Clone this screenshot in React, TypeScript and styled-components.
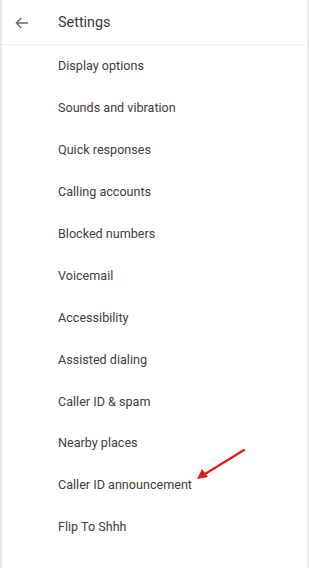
import React from 'react';
import styled, {createGlobalStyle} from 'styled-components';

const GlobalStyle = createGlobalStyle`
    html, body {
        margin: 0;
        padding: 0;
        background: #fff;
    }
    body {
        font-family: Roboto, 'Liberation Sans', Arial, sans-serif;
    }
`;

const Frame = styled.div`
    position: relative;
    width: 309px;
    height: 568px;
    box-sizing: border-box;
    border-left: 2px solid #e8e8e8;
    border-right: 2px solid #ececec;
    background: #fff;
    overflow: hidden;
`;

const Header = styled.header`
    display: flex;
    align-items: center;
    height: 45px;
    padding-top: 1px;
    box-sizing: border-box;
    border-bottom: 1px solid #efefef;
`;

const BackButton = styled.span`
    display: inline-flex;
    align-items: center;
    justify-content: center;
    width: 44px;
    height: 44px;
    margin-left: -2px;
    color: #6a6a6a;
`;

const Title = styled.h1`
    margin: 0 0 0 14px;
    font-size: 14.4px;
    font-weight: 400;
    color: #3a3a3a;
`;

const List = styled.ul`
    list-style: none;
    margin: 0;
    padding: 0;
`;

const Item = styled.li`
    display: flex;
    align-items: center;
    height: 41.9px;
    padding-left: 56px;
    font-size: 12.6px;
    color: #404040;
`;

const Pointer = styled.svg`
    position: absolute;
    left: 188px;
    top: 445px;
`;

const items = [
    'Display options',
    'Sounds and vibration',
    'Quick responses',
    'Calling accounts',
    'Blocked numbers',
    'Voicemail',
    'Accessibility',
    'Assisted dialing',
    'Caller ID & spam',
    'Nearby places',
    'Caller ID announcement',
    'Flip To Shhh',
];

export default function App() {
    return (
        <>
            <GlobalStyle />
            <Frame>
                <Header>
                    <BackButton>
                        <svg width="16" height="16" viewBox="0 0 24 24" fill="none" stroke="currentColor" strokeWidth="2">
                            <path d="M21 12H4M11 4.5L3.5 12l7.5 7.5" />
                        </svg>
                    </BackButton>
                    <Title>Settings</Title>
                </Header>
                <List>
                    {items.map(label => (
                        <Item key={label}>{label}</Item>
                    ))}
                </List>
                <Pointer width="60" height="40" viewBox="0 0 60 40">
                    <line x1="54" y1="5" x2="15" y2="29" stroke="#e01b1b" strokeWidth="2.2" strokeLinecap="round" />
                    <polygon points="7,34 12,24 18,32" fill="#e01b1b" />
                </Pointer>
            </Frame>
        </>
    );
}
